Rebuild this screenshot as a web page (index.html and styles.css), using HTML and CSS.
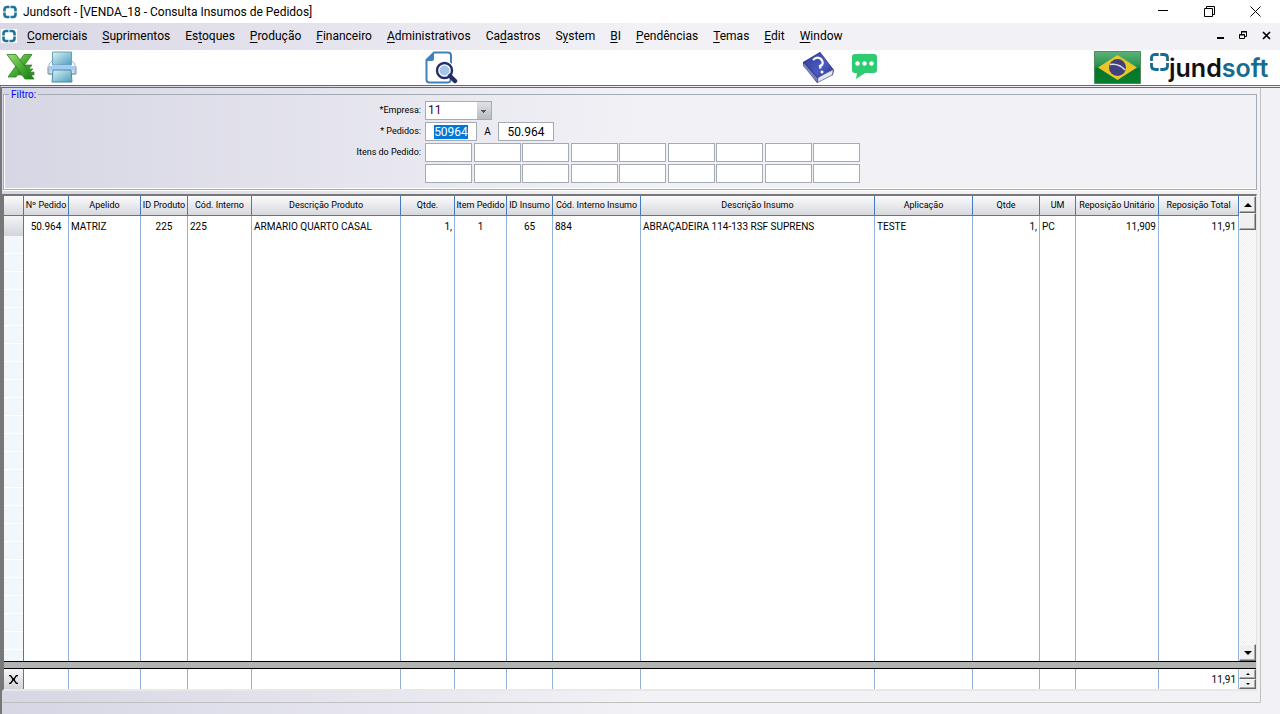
FILE: index.html
```html
<!DOCTYPE html>
<html lang="pt-BR">
<head>
<meta charset="utf-8">
<title>Jundsoft - [VENDA_18 - Consulta Insumos de Pedidos]</title>
<link rel="stylesheet" href="styles.css">
</head>
<body>
<svg class="defs" width="0" height="0" aria-hidden="true">
  <symbol id="mark" viewBox="0 0 16 16"><path d="M7 3H5Q2.500 3 2.500 5.500V7M9 3H11Q13.500 3 13.500 5.500V7M2.500 9V10.500Q2.500 13 5 13H7M13.500 9V10.500Q13.500 13 11 13H9" fill="none" stroke="#1f7396" stroke-width="2.600"/><path d="M7 3H9M7 13H9M2.500 7V9M13.500 7V9" stroke="#8dbccd" stroke-width="2.600"/></symbol>
</svg>

<header class="titlebar">
  <svg class="app-icon" width="16" height="16"><use href="#mark"/></svg>
  <h1 class="title">Jundsoft - [VENDA_18 - Consulta Insumos de Pedidos]</h1>
  <div class="window-buttons">
    <button class="window-button" aria-label="Minimizar"><svg width="11" height="11"><path d="M0 4.500H10" stroke="#000"/></svg></button>
    <button class="window-button" aria-label="Restaurar"><svg width="11" height="11"><path d="M.5 2.500H8.500V10.500H.5ZM2.500 2V.5H10.500V8.500H9" fill="none" stroke="#000"/></svg></button>
    <button class="window-button" aria-label="Fechar"><svg width="11" height="11"><path d="M.5.5L10.500 10.500M10.500.5L.5 10.500" stroke="#000"/></svg></button>
  </div>
</header>

<nav class="menubar">
  <svg class="child-icon" width="16" height="14" viewBox="0 1 16 14"><use href="#mark" width="16" height="16"/></svg>
  <div class="menus">
    <a class="menu" href="#"><u>C</u>omerciais</a>
    <a class="menu" href="#"><u>S</u>uprimentos</a>
    <a class="menu" href="#">Es<u>t</u>oques</a>
    <a class="menu" href="#"><u>P</u>rodução</a>
    <a class="menu" href="#"><u>F</u>inanceiro</a>
    <a class="menu" href="#"><u>A</u>dministrativos</a>
    <a class="menu" href="#">Ca<u>d</u>astros</a>
    <a class="menu" href="#">S<u>y</u>stem</a>
    <a class="menu" href="#"><u>B</u>I</a>
    <a class="menu" href="#"><u>P</u>endências</a>
    <a class="menu" href="#"><u>T</u>emas</a>
    <a class="menu" href="#"><u>E</u>dit</a>
    <a class="menu" href="#"><u>W</u>indow</a>
  </div>
  <div class="child-buttons">
    <button class="child-button" aria-label="Minimizar janela"><svg width="9" height="9"><path d="M1 7H8" stroke="#000" stroke-width="2"/></svg></button>
    <button class="child-button" aria-label="Restaurar janela"><svg width="9" height="9"><path d="M.5 3.500H5.500V7.500H.5ZM0 4H6M2.500 3V.5H7.500V5.500H6M2 1H8" fill="none" stroke="#000"/></svg></button>
    <button class="child-button" aria-label="Fechar janela"><svg width="9" height="9"><path d="M1 1L8 8M8 1L1 8" stroke="#000" stroke-width="1.700"/></svg></button>
  </div>
</nav>

<div class="toolbar">
  <div class="tools">
    <button class="tool" aria-label="Exportar para Excel">
      <svg width="30" height="28" viewBox="0 0 30 28">
        <defs><linearGradient id="g1" x1="0" y1="0" x2="1" y2="1"><stop offset="0" stop-color="#9fe070"/><stop offset=".5" stop-color="#4cae35"/><stop offset="1" stop-color="#187a12"/></linearGradient></defs>
        <path d="M17 12H26L23 16H27L24 19H28V22H12Z" fill="#3c9a2c" stroke="#23761d" stroke-width=".6"/>
        <path d="M18 1.500H26L10 24H2Z" fill="url(#g1)" stroke="#2a8221" stroke-width=".8"/>
        <path d="M1 1.500H10L28 26H19Z" fill="url(#g1)" stroke="#2a8221" stroke-width=".8"/>
      </svg>
    </button>
    <button class="tool" aria-label="Imprimir">
      <svg width="30" height="32" viewBox="0 0 30 32">
        <defs><linearGradient id="g2" x1="0" y1="0" x2="1" y2="1"><stop offset="0" stop-color="#d9f1f8"/><stop offset="1" stop-color="#4c9fbc"/></linearGradient><linearGradient id="g3" x1="0" y1="0" x2="0" y2="1"><stop offset="0" stop-color="#eaf2fb"/><stop offset=".45" stop-color="#fff"/><stop offset=".5" stop-color="#9fc5f2"/><stop offset="1" stop-color="#e3edf8"/></linearGradient></defs>
        <path d="M5 10H25L28 13V23H2V13Z" fill="url(#g3)" stroke="#a3b4c3"/><path d="M1 15.500V23H5M29 15.500V23H25" fill="none" stroke="#7d8e9b"/>
        <path d="M5.500 1H24.500V14H5.500Z" fill="url(#g2)" stroke="#67a2b5"/><path d="M2 15H28V19H2Z" fill="#a5caf4"/>
        <path d="M6 19H24L25 31H5Z" fill="url(#g2)" stroke="#478ba5"/>
      </svg>
    </button>
  </div>
  <div class="tools">
    <button class="tool" aria-label="Consultar">
      <svg width="33" height="33" viewBox="0 0 33 33">
        <path d="M9 1.500H23Q26 1.500 26 4.500V25Q26 31.500 23 31.500H4.500Q1.500 31.500 1.500 28.500V9Z" fill="#fff" stroke="#4080c0" stroke-width="2"/>
        <path d="M9 1L1 10H7Q9 10 9 8Z" fill="#4080c0"/>
        <circle cx="19.500" cy="19.500" r="8" fill="#fff" stroke="#fff" stroke-width="4"/><circle cx="19.500" cy="19.500" r="7.500" fill="#fff" stroke="#252c69" stroke-width="2.400"/><circle cx="19.500" cy="19.500" r="5" fill="#a1c6e7"/>
        <path d="M25 25L30 30" stroke="#252c69" stroke-width="4.500" stroke-linecap="round"/>
      </svg>
    </button>
  </div>
  <div class="tools help">
    <button class="tool" aria-label="Ajuda">
      <svg width="33" height="33" viewBox="0 0 33 33">
        <defs><linearGradient id="g4" x1="0" y1="0" x2="1" y2="1"><stop offset="0" stop-color="#333d9b"/><stop offset=".6" stop-color="#4b5ac0"/><stop offset="1" stop-color="#29347f"/></linearGradient></defs>
        <path d="M1 11L18 1L32 19L31 24L15 32L1 14Z" fill="#303a82"/>
        <path d="M16 26L31 19L30 24L16 31Z" fill="#e4e6f1" stroke="#979bb6" stroke-width=".7"/>
        <path d="M3 11L18 1L31 18L16 27Z" fill="url(#g4)"/><path d="M2 12L15 27V31L1 15Z" fill="#7780c0"/>
        <path d="M11 9Q15 5 19 8Q23 13 18 15L18.500 17.500" fill="none" stroke="#fff" stroke-width="2.200"/><circle cx="20" cy="21" r="1.500" fill="#fff"/>
      </svg>
    </button>
    <button class="tool" aria-label="Mensagens">
      <svg width="27" height="26" viewBox="0 0 27 26"><path d="M4 0H23Q26 0 26 3V16Q26 19 23 19H14L5 25L6 19H4Q1 19 1 16V3Q1 0 4 0Z" fill="#2ecc71"/><g fill="#fff"><circle cx="6.500" cy="9.500" r="2.200"/><circle cx="13.500" cy="9.500" r="2.200"/><circle cx="20.500" cy="9.500" r="2.200"/></g></svg>
    </button>
  </div>
  <div class="brand">
    <button class="tool" aria-label="Idioma: português do Brasil">
      <svg width="47" height="33" viewBox="0 0 47 33">
        <defs><linearGradient id="g5" x1="0" y1="0" x2="0" y2="1"><stop offset="0" stop-color="#5cb479"/><stop offset=".45" stop-color="#29914c"/><stop offset=".55" stop-color="#08752c"/><stop offset="1" stop-color="#077e2c"/></linearGradient></defs>
        <path d="M.5.5H46.500V32.500H.5Z" fill="url(#g5)" stroke="#4d8b60"/><path d="M4 16.500L23.500 4L43 16.500L23.500 29Z" fill="#e9c52b"/><circle cx="23.500" cy="16.500" r="8.500" fill="#40407f"/><path d="M16 13.500Q25 12 31 19" fill="none" stroke="#d8dbea" stroke-width="1.500"/>
      </svg>
    </button>
    <svg class="logo" width="124" height="34" viewBox="0 0 124 34" role="img" aria-label="jundsoft">
      <path d="M9.700 4.500H6.500Q2.500 4.500 2.500 7.500V11M11.300 4.500H14.500Q18.500 4.500 18.500 7.500V11M2.500 13V16Q2.500 19.500 6.500 19.500H9.700M18.500 13V16Q18.500 19.500 14.500 19.500H11.300" fill="none" stroke="#176a90" stroke-width="2.800"/>
      <text class="logo-text" x="20" y="27">jund<tspan class="logo-accent">soft</tspan></text>
    </svg>
  </div>
</div>

<main class="workspace">
  <div class="panel">
    <form class="filter-form">
      <fieldset class="filter">
        <legend class="legend">Filtro:</legend>
        <div class="fields">
          <label class="label" for="empresa">*Empresa:</label>
          <div class="controls"><select class="control company" id="empresa"><option>11</option></select></div>
          <label class="label" for="de">* Pedidos:</label>
          <div class="controls">
            <input class="control from" id="de" value="50964" autofocus>
            <label class="to-label" for="ate">A</label>
            <input class="control to" id="ate" value="50.964">
          </div>
          <label class="label" for="item1">Itens do Pedido:</label>
          <div class="items">
            <input class="control" id="item1"><input class="control" aria-label="Item 2"><input class="control" aria-label="Item 3"><input class="control" aria-label="Item 4"><input class="control" aria-label="Item 5"><input class="control" aria-label="Item 6"><input class="control" aria-label="Item 7"><input class="control" aria-label="Item 8"><input class="control" aria-label="Item 9">
            <input class="control" aria-label="Item 10"><input class="control" aria-label="Item 11"><input class="control" aria-label="Item 12"><input class="control" aria-label="Item 13"><input class="control" aria-label="Item 14"><input class="control" aria-label="Item 15"><input class="control" aria-label="Item 16"><input class="control" aria-label="Item 17"><input class="control" aria-label="Item 18">
          </div>
        </div>
      </fieldset>
    </form>

    <section class="grid">
      <div class="grid-body">
        <table class="data">
          <colgroup><col class="w-mark"><col class="w-order"><col class="w-nick"><col class="w-prod"><col class="w-code"><col class="w-desc"><col class="w-qty"><col class="w-item"><col class="w-input"><col class="w-incode"><col class="w-indesc"><col class="w-use"><col class="w-inqty"><col class="w-unit"><col class="w-price"><col class="w-total"></colgroup>
          <thead>
            <tr><th></th><th>Nº Pedido</th><th>Apelido</th><th>ID Produto</th><th>Cód. Interno</th><th>Descrição Produto</th><th>Qtde.</th><th>Item Pedido</th><th>ID Insumo</th><th>Cód. Interno Insumo</th><th>Descrição Insumo</th><th>Aplicação</th><th>Qtde</th><th>UM</th><th>Reposição Unitário</th><th>Reposição Total</th></tr>
          </thead>
          <tbody>
            <tr class="row"><td class="current"></td><td class="mid">50.964</td><td>MATRIZ</td><td class="mid">225</td><td>225</td><td>ARMARIO QUARTO CASAL</td><td class="num">1,</td><td class="mid">1</td><td class="mid">65</td><td>884</td><td>ABRAÇADEIRA 114-133 RSF SUPRENS</td><td>TESTE</td><td class="num">1,</td><td>PC</td><td class="num">11,909</td><td class="num">11,91</td></tr>
            <tr class="rest"><td class="gutter"></td><td></td><td></td><td></td><td></td><td></td><td></td><td></td><td></td><td></td><td></td><td></td><td></td><td></td><td></td><td></td></tr>
          </tbody>
        </table>
        <div class="scroll">
          <button class="scroll-button" aria-label="Rolar para cima"><svg width="8" height="4"><path d="M4 0L8 4H0Z"/></svg></button>
          <div class="thumb"></div>
          <button class="scroll-button last" aria-label="Rolar para baixo"><svg width="8" height="4"><path d="M0 0H8L4 4Z"/></svg></button>
        </div>
      </div>
      <div class="splitter"></div>
      <div class="grid-foot">
        <table class="data">
          <colgroup><col class="w-mark"><col class="w-order"><col class="w-nick"><col class="w-prod"><col class="w-code"><col class="w-desc"><col class="w-qty"><col class="w-item"><col class="w-input"><col class="w-incode"><col class="w-indesc"><col class="w-use"><col class="w-inqty"><col class="w-unit"><col class="w-price"><col class="w-total"></colgroup>
          <tbody><tr class="row"><td class="sum"><svg width="9" height="9"><path d="M0 .5H1.500L4 4H5L7.500 .5H9M0 8.500H1.500L4 5H5L7.500 8.500H9M3 4.500H6" fill="none" stroke="#000" stroke-width="1.300"/></svg></td><td></td><td></td><td></td><td></td><td></td><td></td><td></td><td></td><td></td><td></td><td></td><td></td><td></td><td></td><td class="num">11,91</td></tr></tbody>
        </table>
        <div class="spin">
          <button class="spin-button" aria-label="Anterior"><svg width="4" height="2"><path d="M2 0L4 2H0Z"/></svg></button>
          <button class="spin-button" aria-label="Próximo"><svg width="4" height="2"><path d="M0 0H4L2 2Z"/></svg></button>
        </div>
      </div>
    </section>
  </div>
</main>
<script src="app.js"></script>
</body>
</html>
```

FILE: styles.css
```css
* { box-sizing: border-box; }

body {
  display: flex;
  flex-direction: column;
  min-height: 100vh;
  margin: 0;
  background: #fff;
  color: #000;
  font: 10px/13px Roboto, "Liberation Sans", sans-serif;
}

button {
  display: flex;
  align-items: center;
  justify-content: center;
  padding: 0;
  border: 0;
  background: none;
}

.defs { display: none; }

.titlebar {
  display: flex;
  align-items: center;
  height: 23px;
  padding: 0 2px;
}
.title { margin: 0 0 0 5px; font-size: 12px; font-weight: 400; line-height: 16px; }
.window-buttons { display: flex; margin-left: auto; }
.window-button { width: 46px; height: 21px; }

.menubar {
  display: flex;
  align-items: center;
  height: 27px;
  padding: 0 2px 2px 1px;
  background: linear-gradient(90deg, #d8d7e5, #f2f1f6 50%);
  font-size: 12px;
  line-height: 16px;
}
.child-icon { background: #fff; }
.menus { display: flex; gap: 15px; margin-left: 10px; }
.menu { color: #000; text-decoration: none; }
.menu u { text-underline-offset: 2px; text-decoration-thickness: 1px; }
.child-buttons { display: flex; margin-left: auto; }
.child-button { width: 23px; height: 23px; }

.toolbar {
  display: grid;
  grid-template-columns: 419px 377px 1fr auto;
  align-items: center;
  height: 35px;
  padding: 0 7px 2px 6px;
}
.tools { display: flex; align-items: center; gap: 11px; }
.help { gap: 16px; }
.brand { display: flex; align-items: center; gap: 8px; }
.logo-text { font: 600 25px Inter, sans-serif; fill: #111; }
.logo-accent { fill: #176a90; }

.workspace {
  display: flex;
  flex: 1;
  padding: 0 19px 11px 0;
  border-top: 3px double #666b66;
  border-left: 2px solid #777;
  background: linear-gradient(90deg, #d6d6e4, #f2f1f6 50%);
}
.panel {
  display: flex;
  flex: 1;
  flex-direction: column;
  min-width: 0;
  border-right: 1px solid #c0c0c0;
  border-bottom: 1px solid #c0c0c0;
}

.filter-form { padding: 0 3px 4px 1px; }
.filter {
  min-width: 0;
  margin: 0;
  padding: 0 0 6px;
  border: 1px solid #a3abb5;
  box-shadow: inset 1px -1px #fff, 0 1px #fff;
}
.legend { margin-left: 5px; padding: 0 2px; color: #00f; }
.fields {
  display: grid;
  grid-template-columns: 417px auto;
  gap: 2px 4px;
  align-items: start;
}
.label { padding-top: 3px; font-size: 9px; text-align: right; }
.controls { display: flex; align-items: center; }
.control {
  height: 19px;
  min-width: 0;
  margin: 0;
  padding: 0 2px;
  border: 1px solid #a3abb5;
  border-radius: 0;
  outline: 0;
  background: #fff;
  color: #000;
  font: 12px/17px Roboto, "Liberation Sans", sans-serif;
}
.control::selection { background: #0078d7; color: #fff; }
.company {
  width: 67px;
  appearance: none;
  color: #400040;
  background: linear-gradient(#555, #555) right 5px top 8px / 5px 1px no-repeat, linear-gradient(#555, #555) right 6px top 9px / 3px 1px no-repeat, linear-gradient(#555, #555) right 7px top 10px / 1px 1px no-repeat, linear-gradient(#dfe1e5, #b7bcc4) right / 14px 17px no-repeat, #fff;
}
.from { width: 52px; text-align: center; }
.to-label { width: 21px; text-align: center; }
.to { width: 56px; text-align: center; }
.items {
  display: grid;
  grid-template-columns: repeat(9, 47px);
  row-gap: 2px;
  justify-content: space-between;
  width: 435px;
}

.grid {
  display: flex;
  flex: 1;
  flex-direction: column;
  margin: 0 3px 11px 0;
  border: solid;
  border-width: 2px 1px 2px 2px;
  border-color: #777 #e4e4e4 #e8e8e8 #777;
  background: #fff;
}
.grid-body { display: flex; flex: 1; }
.grid-foot { display: flex; }
.data { flex: 1; width: 100%; min-width: 0; table-layout: fixed; border-collapse: separate; border-spacing: 0; }
.w-mark { width: 20px; }
.w-order { width: 45px; }
.w-nick { width: 72px; }
.w-prod { width: 47px; }
.w-code { width: 64px; }
.w-desc { width: 149px; }
.w-qty { width: 54px; }
.w-item { width: 52px; }
.w-input { width: 46px; }
.w-incode { width: 88px; }
.w-use { width: 98px; }
.w-inqty { width: 67px; }
.w-unit { width: 36px; }
.w-price { width: 83px; }
.w-total { width: 80px; }

th, td {
  padding: 0 2px;
  border-right: 1px solid #94b2d8;
  white-space: nowrap;
  text-align: left;
}
th {
  height: 20px;
  padding: 0;
  border-right-color: #447ac0;
  border-bottom: 1px solid #447ac0;
  background: linear-gradient(#fbfbfc, #d6d8dd);
  font-size: 9px;
  font-weight: 400;
  text-align: center;
}
.row { height: 20px; }
td:first-child { border-right-color: #447ac0; }
.mid { text-align: center; }
.num { text-align: right; }
.current { background: linear-gradient(#f3f4f6, #d2d4d9); }
.gutter { background: repeating-linear-gradient(#f2f7fc 0 17px, #fff 17px 18px); }
.sum { background: linear-gradient(#f6f6f8, #d2d4d9); text-align: center; }
.sum svg { display: block; margin: 0 auto; }

.scroll {
  display: flex;
  flex-direction: column;
  width: 17px;
  background: repeating-conic-gradient(#fff 0 25%, #ececec 0 50%) 0 0 / 2px 2px;
}
.scroll-button, .thumb, .spin-button {
  border: 1px solid;
  border-color: #f8f8f8 #666 #666 #f8f8f8;
  background: #f0f0f0;
  box-shadow: inset -1px -1px #aaa;
}
.scroll-button { height: 17px; }
.thumb { height: 17px; }
.last { margin-top: auto; }
.splitter { height: 8px; border: solid #000; border-width: 1px 0; background: #b3b3b3; }
.spin { display: flex; flex-direction: column; width: 17px; }
.spin-button { flex: 1; }
```

FILE: app.js
```js
const from = document.getElementById("de");
from.focus();
from.select();
```
